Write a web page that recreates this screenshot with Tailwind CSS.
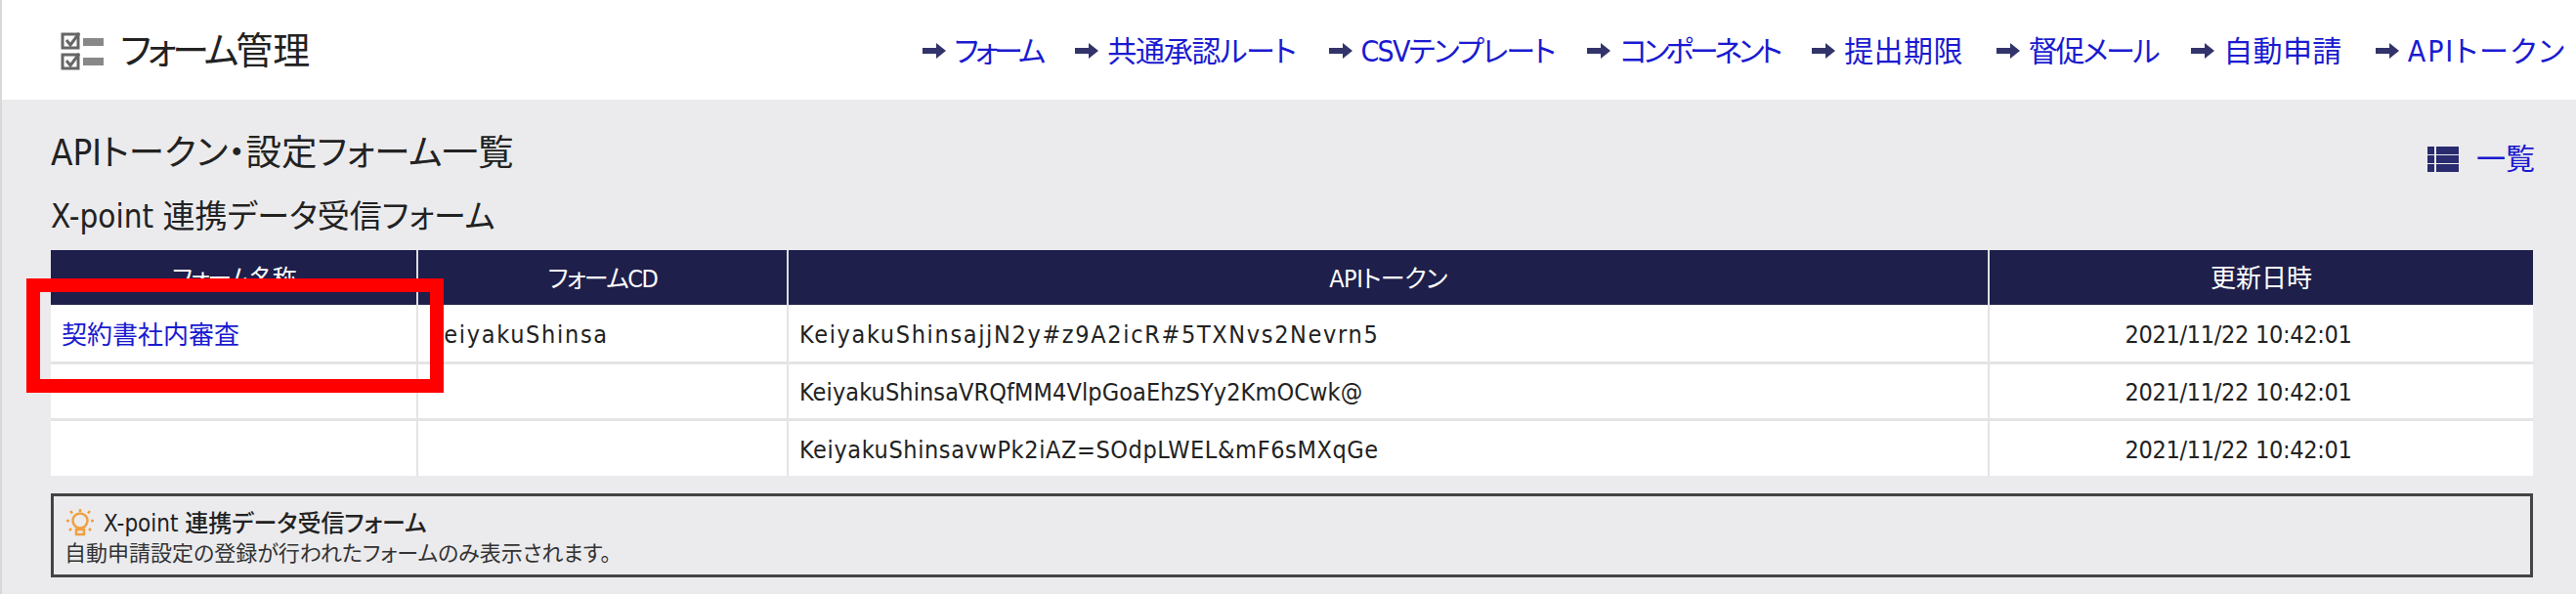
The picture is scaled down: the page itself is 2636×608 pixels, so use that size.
<!DOCTYPE html>
<html lang="ja">
<head>
  <meta charset="UTF-8">
  <title>フォーム管理</title>
  <script src="https://cdn.jsdelivr.net/npm/@tailwindcss/browser@4"></script>
</head>
<body class="bg-[#ebebed] font-['DejaVu_Sans','Noto_Sans_CJK_JP',sans-serif] [font-stretch:condensed] [font-feature-settings:'palt'] text-[#222]">
  <div class="relative w-[2636px] h-[608px] overflow-hidden border-l-2 border-[#d8d8d8]">
    <!-- header -->
    <header class="h-[102px] bg-white flex items-center justify-between pl-[60px] pr-[10px] pt-[2px]">
      <div class="flex items-center gap-[15px]">
        <svg width="46" height="42" viewBox="0 0 46 42" class="text-[#666]">
          <g fill="none" stroke="currentColor" stroke-width="3">
            <rect x="2" y="4" width="16" height="14"/>
            <rect x="2" y="25" width="16" height="14"/>
            <path d="M6 10l4 5 9-12M6 31l4 5 9-12"/>
          </g>
          <rect x="23" y="8" width="21" height="8" fill="#888"/>
          <rect x="23" y="28" width="21" height="8" fill="#888"/>
        </svg>
        <h1 class="text-[38px] leading-none"><span class="tracking-[-4px] mr-[1px]">フォーム</span>管理</h1>
      </div>
      <nav class="flex items-center gap-[33px] text-[30px] text-[#1a1ad0]">
        <a class="flex items-center gap-[8px]"><svg width="26" height="18" viewBox="0 0 26 18"><path d="M1 6h14V1l10 8-10 8v-5H1z" fill="#33336b"/></svg><span class="tracking-[-3.9px]">フォーム</span></a>
        <a class="flex items-center gap-[8px]"><svg width="26" height="18" viewBox="0 0 26 18"><path d="M1 6h14V1l10 8-10 8v-5H1z" fill="#33336b"/></svg><span class="tracking-[-1.2px]">共通承認ルート</span></a>
        <a class="flex items-center gap-[8px]"><svg width="26" height="18" viewBox="0 0 26 18"><path d="M1 6h14V1l10 8-10 8v-5H1z" fill="#33336b"/></svg><span class="tracking-[-1.8px]">CSVテンプレート</span></a>
        <a class="flex items-center gap-[8px]"><svg width="26" height="18" viewBox="0 0 26 18"><path d="M1 6h14V1l10 8-10 8v-5H1z" fill="#33336b"/></svg><span class="tracking-[-4.2px]">コンポーネント</span></a>
        <a class="flex items-center gap-[8px]"><svg width="26" height="18" viewBox="0 0 26 18"><path d="M1 6h14V1l10 8-10 8v-5H1z" fill="#33336b"/></svg><span class="tracking-[0.4px]">提出期限</span></a>
        <a class="flex items-center gap-[8px]"><svg width="26" height="18" viewBox="0 0 26 18"><path d="M1 6h14V1l10 8-10 8v-5H1z" fill="#33336b"/></svg><span class="tracking-[-2.3px]">督促メール</span></a>
        <a class="flex items-center gap-[8px]"><svg width="26" height="18" viewBox="0 0 26 18"><path d="M1 6h14V1l10 8-10 8v-5H1z" fill="#33336b"/></svg><span class="tracking-[0.4px]">自動申請</span></a>
        <a class="flex items-center gap-[8px]"><svg width="26" height="18" viewBox="0 0 26 18"><path d="M1 6h14V1l10 8-10 8v-5H1z" fill="#33336b"/></svg><span class="tracking-[1.9px]">APIトークン</span></a>
      </nav>
    </header>

    <main class="pl-[50px] pr-[42px]">
      <div class="flex items-start justify-between h-[86px] pt-[33px]">
        <h2 class="text-[36.5px] leading-[44px]">APIトークン・設定フォーム一覧</h2>
        <a class="flex items-center gap-[18px] text-[30px] text-[#1a1ad0] leading-[40px] pt-[8px]">
          <svg width="32" height="26" viewBox="0 0 32 26" fill="#2a2a6e">
            <rect x="0" y="0" width="7" height="8"/><rect x="9" y="0" width="23" height="8"/>
            <rect x="0" y="9" width="7" height="8"/><rect x="9" y="9" width="23" height="8"/>
            <rect x="0" y="18" width="7" height="8"/><rect x="9" y="18" width="23" height="8"/>
          </svg>一覧
        </a>
      </div>
      <h3 class="text-[33px] leading-[40px] h-[68px] pt-[14px]">X-point 連携データ受信フォーム</h3>

      <table class="w-[2540px] table-fixed border-collapse text-[25px]">
        <colgroup>
          <col class="w-[375px]"><col class="w-[379px]"><col class="w-[1229px]"><col class="w-[557px]">
        </colgroup>
        <thead class="bg-[#1e1f4b] text-white">
          <tr class="h-[56px]">
            <th class="font-normal pt-[3px] border-r-2 border-[#ddd] tracking-[-2px]">フォーム名称</th>
            <th class="font-normal pt-[3px] border-r-2 border-[#ddd] tracking-[-1.5px]">フォームCD</th>
            <th class="font-normal pt-[3px] border-r-2 border-[#ddd] tracking-[-0.5px]">APIトークン</th>
            <th class="font-normal pt-[3px] text-[26px]">更新日時</th>
          </tr>
        </thead>
        <tbody class="bg-white">
          <tr class="h-[59px] border-b-3 border-[#e4e4e4]">
            <td class="border-r-2 border-[#e4e4e4] pl-[11px] pt-[6px] text-[#1a1ad0] text-[26px]"><a>契約書社内審査</a></td>
            <td class="border-r-2 border-[#e4e4e4] pl-[11px] pt-[4px] tracking-[1.7px]">KeiyakuShinsa</td>
            <td class="border-r-2 border-[#e4e4e4] pl-[11px] pt-[4px] tracking-[1.65px]">KeiyakuShinsajjN2y#z9A2icR#5TXNvs2Nevrn5</td>
            <td class="text-center pt-[4px] pr-[47px] tracking-[-0.3px]">2021/11/22 10:42:01</td>
          </tr>
          <tr class="h-[58px] border-b-3 border-[#e4e4e4]">
            <td class="border-r-2 border-[#e4e4e4]"></td>
            <td class="border-r-2 border-[#e4e4e4]"></td>
            <td class="border-r-2 border-[#e4e4e4] pl-[11px] pt-[4px] tracking-[0.1px]">KeiyakuShinsaVRQfMM4VlpGoaEhzSYy2KmOCwk@</td>
            <td class="text-center pt-[4px] pr-[47px] tracking-[-0.3px]">2021/11/22 10:42:01</td>
          </tr>
          <tr class="h-[58px]">
            <td class="border-r-2 border-[#e4e4e4]"></td>
            <td class="border-r-2 border-[#e4e4e4]"></td>
            <td class="border-r-2 border-[#e4e4e4] pl-[11px] pt-[4px] tracking-[0.6px]">KeiyakuShinsavwPk2iAZ=SOdpLWEL&amp;mF6sMXqGe</td>
            <td class="text-center pt-[4px] pr-[47px] tracking-[-0.3px]">2021/11/22 10:42:01</td>
          </tr>
        </tbody>
      </table>

      <div class="mt-[18px] w-[2540px] h-[86px] border-[3px] border-[#444] px-[11px] pt-[12px] text-[24px] leading-[30px]">
        <div class="flex items-center gap-[8px]">
          <svg width="32" height="32" viewBox="0 0 32 32" fill="none" stroke="#f0a040" stroke-width="2.5">
            <circle cx="16" cy="13" r="7.5"/>
            <path d="M12 22h8v5h-8zM16 1v3M2 13h3M27 13h3M6 3l2 2.5M26 3l-2 2.5M5 23l2-2M27 23l-2-2"/>
          </svg>
          <span class="font-medium">X-point 連携データ受信フォーム</span>
        </div>
        <p class="text-[#333] text-[22px]">自動申請設定の登録が行われたフォームのみ表示されます。</p>
      </div>
    </main>

    <!-- red annotation frame -->
    <div class="absolute left-[25px] top-[285px] w-[427px] h-[117px] border-[14px] border-[#ff0000]"></div>
  </div>
</body>
</html>
